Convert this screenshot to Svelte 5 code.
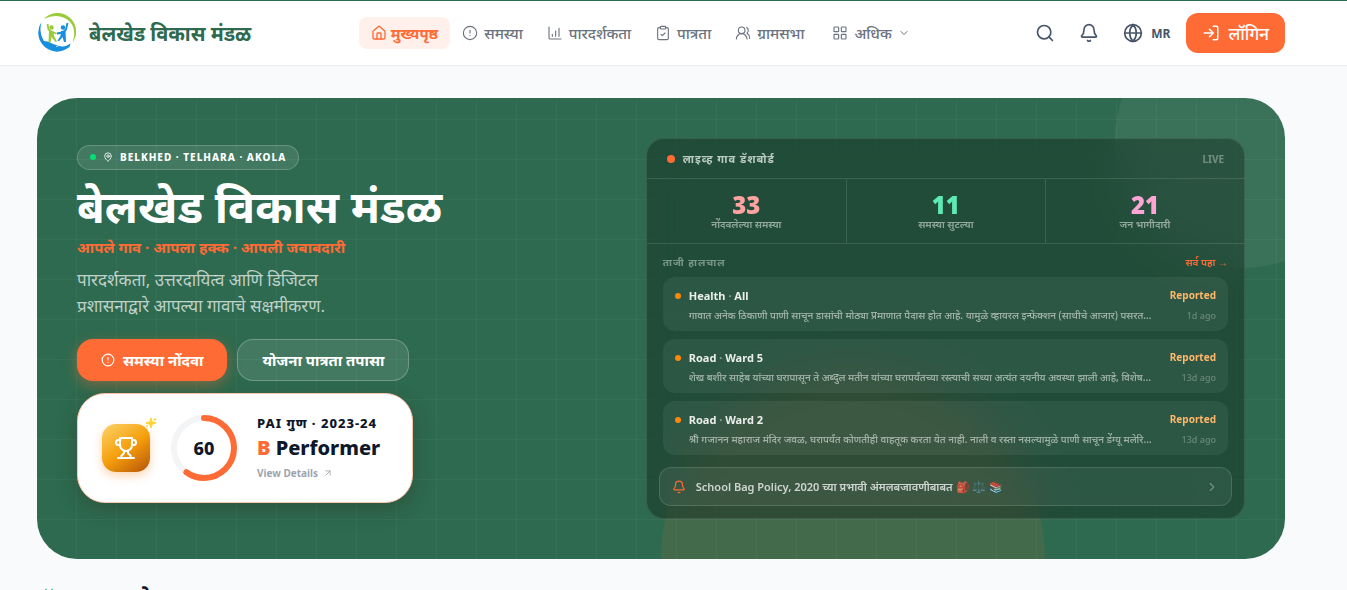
<script>
  const nav = [
    { label: 'मुख्यपृष्ठ', icon: 'home', active: true },
    { label: 'समस्या', icon: 'alert' },
    { label: 'पारदर्शकता', icon: 'chart' },
    { label: 'पात्रता', icon: 'clipboard' },
    { label: 'ग्रामसभा', icon: 'users' },
    { label: 'अधिक', icon: 'grid', more: true }
  ];
  const stats = [
    { value: 33, label: 'नोंदवलेल्या समस्या', tone: 'rose' },
    { value: 11, label: 'समस्या सुटल्या', tone: 'mint' },
    { value: 21, label: 'जन भागीदारी', tone: 'pink' }
  ];
  const feed = [
    { kind: 'Health', area: 'All', age: '1d ago', text: 'गावात अनेक ठिकाणी पाणी साचून डासांची मोठ्या प्रमाणात पैदास होत आहे. यामुळे व्हायरल इन्फेक्शन (साथीचे आजार) पसरत...' },
    { kind: 'Road', area: 'Ward 5', age: '13d ago', text: 'शेख बशीर साहेब यांच्या घरापासून ते अब्दुल मतीन यांच्या घरापर्यंतच्या रस्त्याची सध्या अत्यंत दयनीय अवस्था झाली आहे, विशेष...' },
    { kind: 'Road', area: 'Ward 2', age: '13d ago', text: 'श्री गजानन महाराज मंदिर जवळ, घरापर्यंत कोणतीही वाहतूक करता येत नाही. नाली व रस्ता नसल्यामुळे पाणी साचून डेंग्यू मलेरि...' }
  ];
</script>

{#snippet icon(name, size = 16, width = 2)}
  <svg class="icon" width={size} height={size} viewBox="0 0 24 24" stroke-width={width} aria-hidden="true">
    {#if name === 'home'}
      <path d="M15 21v-8a1 1 0 0 0-1-1h-4a1 1 0 0 0-1 1v8" />
      <path d="M3 10a2 2 0 0 1 .7-1.5l7-6a2 2 0 0 1 2.6 0l7 6A2 2 0 0 1 21 10v9a2 2 0 0 1-2 2H5a2 2 0 0 1-2-2z" />
    {:else if name === 'alert'}
      <circle cx="12" cy="12" r="10" /><path d="M12 8v4M12 16h.01" />
    {:else if name === 'chart'}
      <path d="M3 3v16a2 2 0 0 0 2 2h16M8 17v-3M13 17V9M18 17V5" />
    {:else if name === 'clipboard'}
      <rect x="8" y="2" width="8" height="4" rx="1" />
      <path d="M16 4h2a2 2 0 0 1 2 2v14a2 2 0 0 1-2 2H6a2 2 0 0 1-2-2V6a2 2 0 0 1 2-2h2M9 14l2 2 4-4" />
    {:else if name === 'users'}
      <circle cx="10" cy="8" r="5" /><path d="M18 21a8 8 0 0 0-16 0M22 20c0-3.4-2-6.5-4-8a5 5 0 0 0-.5-8.3" />
    {:else if name === 'grid'}
      <rect x="3" y="3" width="7" height="7" rx="1" /><rect x="14" y="3" width="7" height="7" rx="1" />
      <rect x="14" y="14" width="7" height="7" rx="1" /><rect x="3" y="14" width="7" height="7" rx="1" />
    {:else if name === 'down'}
      <path d="m6 9 6 6 6-6" />
    {:else if name === 'right'}
      <path d="m9 18 6-6-6-6" />
    {:else if name === 'search'}
      <circle cx="11" cy="11" r="8" /><path d="m21 21-4.3-4.3" />
    {:else if name === 'bell'}
      <path d="M10.3 21a2 2 0 0 0 3.4 0" />
      <path d="M3.3 15.3A1 1 0 0 0 4 17h16a1 1 0 0 0 .7-1.7C19.4 14 18 12.5 18 8A6 6 0 0 0 6 8c0 4.500-1.400 6-2.700 7.300" />
    {:else if name === 'globe'}
      <circle cx="12" cy="12" r="10" /><path d="M12 2a14.500 14.500 0 0 0 0 20 14.500 14.500 0 0 0 0-20M2 12h20" />
    {:else if name === 'login'}
      <path d="M15 3h4a2 2 0 0 1 2 2v14a2 2 0 0 1-2 2h-4M10 17l5-5-5-5M15 12H3" />
    {:else if name === 'pin'}
      <path d="M20 10c0 5-5.500 10.200-7.400 11.800a1 1 0 0 1-1.200 0C9.500 20.200 4 15 4 10a8 8 0 0 1 16 0" /><circle cx="12" cy="10" r="3" />
    {:else if name === 'trophy'}
      <path d="M6 9H4.500a2.500 2.500 0 0 1 0-5H6M18 9h1.500a2.500 2.500 0 0 0 0-5H18M4 22h16M10 14.700V17c0 .5-.5 1-1 1.200C7.900 18.800 7 20.200 7 22M14 14.700V17c0 .5.5 1 1 1.200 1.100.6 2 2 2 3.800M18 2H6v7a6 6 0 0 0 12 0V2Z" />
    {:else if name === 'sparkles'}
      <path fill="currentColor" d="M9.900 15.500A2 2 0 0 0 8.500 14.100l-6.100-1.600a.5.5 0 0 1 0-1L8.500 9.900A2 2 0 0 0 9.900 8.500l1.600-6.100a.5.5 0 0 1 1 0l1.600 6.100a2 2 0 0 0 1.400 1.400l6.100 1.600a.5.5 0 0 1 0 1l-6.100 1.600a2 2 0 0 0-1.400 1.400l-1.600 6.100a.5.5 0 0 1-1 0z" />
      <path d="M20 3v4M22 5h-4M4 17v2M5 18H3" />
    {:else if name === 'out'}
      <path d="M7 7h10v10M7 17 17 7" />
    {:else if name === 'calendar'}
      <path d="M8 2v4M16 2v4M3 10h18" /><rect x="3" y="4" width="18" height="18" rx="2" />
    {/if}
  </svg>
{/snippet}

<div class="page">
  <header>
    <div class="container bar">
      <a class="brand" href="#home">
        <svg width="40" height="40" viewBox="0 0 40 40" aria-hidden="true">
          <path d="M7 6A18.500 18.500 0 0 1 35.500 29.500Q40.500 15 31 7Q20-.5 7 6Z" fill="#9acb3b" />
          <path d="M4.500 9A19 19 0 0 0 8.500 34.500Q20 43 32.500 34L33.500 30.500Q28 34.500 23 33L16 31Q12 28 7 28Q1.500 19 4.500 9Z" fill="#168fdc" />
          <path d="m19 33.500 3-1 4 .3 5-2.500" fill="none" stroke="#fff" stroke-width=".8" />
          <circle cx="14.500" cy="14.500" r="2.200" fill="#9acb3b" />
          <path d="m10.500 11 1 5.500 3 2.500 5 1.500" fill="none" stroke="#9acb3b" stroke-width="1.800" stroke-linejoin="round" />
          <path d="m12 17.500 4.500.5.500 5 3 5.500-1.500.5-4-5-1 5.500h-2z" fill="#9acb3b" />
          <circle cx="26" cy="14.500" r="2.200" fill="#168fdc" />
          <path d="m30.500 10-1.500 6.500-3 3-6 1" fill="none" stroke="#168fdc" stroke-width="1.800" stroke-linejoin="round" />
          <path d="m28.500 17.500-4.500.5-.5 5-3 4.500 1.500.8 3.500-4.300 1.500 5h2z" fill="#168fdc" />
        </svg>
        <span>बेलखेड विकास मंडळ</span>
      </a>
      <nav>
        {#each nav as item}
          <a href="#{item.icon}" class:active={item.active} class:more={item.more}>
            {@render icon(item.icon, 16, item.active ? 2 : 1.7)}<span>{item.label}</span>
            {#if item.more}{@render icon('down', 12)}{/if}
          </a>
        {/each}
      </nav>
      <div class="actions">
        <button class="round" aria-label="Search">{@render icon('search', 20)}</button>
        <button class="round" aria-label="Notifications">{@render icon('bell', 20)}</button>
        <button class="lang">{@render icon('globe', 20)}<span>MR</span></button>
        <button class="login">{@render icon('login', 18)}<span>लॉगिन</span></button>
      </div>
    </div>
  </header>

  <main>
    <section class="hero">
      <div class="disc top"></div>
      <div class="disc bottom"></div>
      <div class="grid-lines"></div>
      <div class="intro">
        <div class="badge"><i></i>{@render icon('pin', 10)}<span>BELKHED · TELHARA · AKOLA</span></div>
        <h1>बेलखेड विकास मंडळ</h1>
        <p class="tagline">आपले गाव · आपला हक्क · आपली जबाबदारी</p>
        <p class="lead">पारदर्शकता, उत्तरदायित्व आणि डिजिटल प्रशासनाद्वारे आपल्या गावाचे सक्षमीकरण.</p>
        <div class="cta">
          <button class="primary">{@render icon('alert', 14)}<span>समस्या नोंदवा</span></button>
          <button class="ghost">योजना पात्रता तपासा</button>
        </div>
        <a class="score" href="#pai">
          <div class="trophy">{@render icon('trophy', 24)}<div class="spark">{@render icon('sparkles', 12)}</div></div>
          <div class="ring">
            <svg width="66" height="66" viewBox="0 0 66 66" aria-hidden="true">
              <circle cx="33" cy="33" r="30" fill="none" stroke="#f3f4f6" stroke-width="6" />
              <circle cx="33" cy="33" r="30" fill="none" stroke="#ff6b35" stroke-width="6" stroke-linecap="round" pathLength="100" stroke-dasharray="60 100" transform="rotate(-90 33 33)" />
            </svg>
            <strong>60</strong>
          </div>
          <div class="grade">
            <span class="year">PAI गुण · 2023-24</span>
            <span class="level"><b>B</b> Performer</span>
            <span class="details">View Details {@render icon('out', 10)}</span>
          </div>
        </a>
      </div>

      <div class="panel">
        <div class="panel-head"><h2><i></i>लाइव्ह गाव डॅशबोर्ड</h2><span>LIVE</span></div>
        <div class="stats">
          {#each stats as s}
            <div><strong class={s.tone}>{s.value}</strong><span>{s.label}</span></div>
          {/each}
        </div>
        <div class="recent">
          <div class="recent-head"><h3>ताजी हालचाल</h3><a href="#all">सर्व पहा →</a></div>
          <ul>
            {#each feed as f}
              <li>
                <i></i>
                <div class="row"><strong>{f.kind} <em>·</em> {f.area}</strong><b>Reported</b></div>
                <div class="row sub"><p>{f.text}</p><time>{f.age}</time></div>
              </li>
            {/each}
          </ul>
        </div>
        <a class="notice" href="#notice">
          {@render icon('bell', 14)}<span>School Bag Policy, 2020 च्या प्रभावी अंमलबजावणीबाबत <small>🎒 ⚖️ 📚</small></span>{@render icon('right', 14)}
        </a>
      </div>
    </section>
    <h2 class="next">{@render icon('calendar', 18)}<span>गावामधले कामकाज</span></h2>
  </main>
</div>

<style>
  :global(body) { background: #f8fafc; }
  .page, .page * { box-sizing: border-box; }
  .page { font-family: "Noto Sans", sans-serif; color: #111827; height: 100vh; overflow: hidden; padding-right: 25px; }
  h1, h2, h3, p, ul { margin: 0; padding: 0; }
  a { color: inherit; text-decoration: none; }
  button { font: inherit; border: 0; background: none; padding: 0; cursor: pointer; }
  .icon { fill: none; stroke: currentColor; stroke-linecap: round; stroke-linejoin: round; flex: none; }
  header { background: #fff; border-top: 1px solid #2d6a4f; border-bottom: 1px solid #e9edf2; margin-right: -25px; padding-right: 25px; }
  .container, main { max-width: 1280px; margin: 0 auto; padding: 0 16px; }
  main { padding-top: 32px; }
  .bar { display: flex; align-items: center; justify-content: space-between; height: 64px; }
  .brand { display: flex; align-items: center; gap: 12px; color: #2d6a4f; font-size: 20px; font-weight: 700; }
  nav { display: flex; align-items: center; margin-left: 6px; }
  nav a { display: flex; align-items: center; gap: 6px; height: 32px; padding: 0 12px; border-radius: 8px; color: #6b7280; font-size: 15px; font-weight: 500; }
  nav .active { gap: 4px; color: #ff6b35; background: #fff0eb; font-weight: 700; }
  nav .more { margin-left: 4px; }
  .actions { display: flex; align-items: center; color: #475569; }
  .round { display: flex; padding: 12px; color: inherit; }
  .lang { display: flex; align-items: center; gap: 8px; padding: 0 16px 0 12px; color: inherit; font-size: 12px; font-weight: 700; }
  .login { display: flex; align-items: center; gap: 8px; height: 40px; padding: 0 16px; border-radius: 12px; color: #fff; background: #ff6b35; font-size: 17px; font-weight: 500; }

  .hero { position: relative; display: grid; grid-template-columns: 1fr 1.1fr; gap: 24px; align-items: center; padding: 40px; border-radius: 40px; overflow: hidden; background: #2d6a4f; color: #fff; }
  .disc { position: absolute; border-radius: 50%; }
  .disc.top { width: 256px; height: 256px; top: -86px; right: -86px; background: rgba(255, 255, 255, .06); }
  .disc.bottom { width: 384px; height: 384px; left: 50%; bottom: -192px; background: rgba(255, 107, 53, .1); }
  .grid-lines { position: absolute; inset: 0; background: repeating-linear-gradient(0deg, transparent 0 39px, rgba(255, 255, 255, .04) 39px 40px), repeating-linear-gradient(90deg, transparent 0 39px, rgba(255, 255, 255, .04) 39px 40px); }
  .intro, .panel { position: relative; min-width: 0; }
  .intro { padding-bottom: 10px; }
  .badge { display: flex; align-items: center; width: fit-content; height: 25px; padding: 0 12px; gap: 7px; border: 1px solid rgba(255, 255, 255, .2); border-radius: 16px; background: rgba(255, 255, 255, .1); font-size: 10px; font-weight: 800; letter-spacing: 1px; }
  .badge i { width: 6px; height: 6px; border-radius: 50%; background: #05df72; }
  h1 { margin-top: 8px; font-size: 45px; line-height: 56px; font-weight: 700; white-space: nowrap; }
  .tagline { margin-top: 1px; color: #ff6b35; font-size: 15px; line-height: 24px; font-weight: 700; }
  .lead { max-width: 290px; margin-top: 8px; color: rgba(255, 255, 255, .7); font-size: 17px; line-height: 26px; }
  .cta { display: flex; gap: 10px; margin-top: 20px; }
  .cta button { display: flex; align-items: center; gap: 8px; height: 42px; padding: 0 24px; border-radius: 16px; color: #fff; font-size: 15px; font-weight: 700; }
  .primary { background: #ff6b35; box-shadow: 0 4px 14px rgba(255, 107, 53, .4); }
  .cta .ghost { border: 1px solid rgba(255, 255, 255, .25); background: rgba(255, 255, 255, .1); }
  .score { display: flex; align-items: center; width: fit-content; height: 110px; margin-top: 12px; padding: 0 32px 0 24px; border: 1px solid #ffc4ae; border-radius: 28px; background: #fff; color: #0f172a; box-shadow: 0 6px 20px rgba(50, 40, 20, .3); }
  .trophy { position: relative; display: grid; place-items: center; width: 48px; height: 48px; border-radius: 14px; color: #fff; background: linear-gradient(145deg, #fcd469, #f59e0b 52%, #b45309); box-shadow: 0 4px 10px rgba(245, 120, 11, .3); }
  .spark { position: absolute; top: -7px; right: -7px; display: flex; color: #fcd535; }
  .ring { display: grid; place-items: center; margin-left: 21px; }
  .ring > * { grid-area: 1 / 1; }
  .ring strong { font-size: 18px; font-weight: 800; }
  .grade { display: flex; flex-direction: column; margin-left: 20px; }
  .year { font-size: 13px; line-height: 20px; font-weight: 800; letter-spacing: 1px; }
  .level { font-size: 20px; line-height: 30px; font-weight: 800; }
  .level b { color: #ff6b35; font-weight: 900; }
  .details { display: flex; align-items: center; gap: 5px; color: #9ca3af; font-size: 10px; line-height: 20px; font-weight: 700; }

  .panel { border: 1px solid rgba(255, 255, 255, .1); border-radius: 18px; background: rgba(0, 0, 0, .28); backdrop-filter: blur(20px); overflow: hidden; }
  .panel-head { display: flex; align-items: center; justify-content: space-between; height: 40px; padding: 0 20px; border-bottom: 1px solid rgba(255, 255, 255, .12); }
  .panel-head h2 { display: flex; align-items: center; gap: 8px; color: rgba(255, 255, 255, .7); font-size: 11px; font-weight: 700; letter-spacing: 1px; }
  .panel-head i { width: 8px; height: 8px; border-radius: 50%; background: #ff6b35; }
  .panel-head span { color: rgba(255, 255, 255, .35); font-size: 10px; font-weight: 700; }
  .stats { display: grid; grid-template-columns: repeat(3, 1fr); border-bottom: 1px solid rgba(255, 255, 255, .12); }
  .stats div { display: flex; flex-direction: column; align-items: center; height: 64px; padding-top: 14px; border-left: 1px solid rgba(255, 255, 255, .12); }
  .stats div:first-child { border-left: 0; }
  .stats strong { font-size: 24px; line-height: 24px; font-weight: 900; }
  .stats span { color: rgba(255, 255, 255, .5); font-size: 10px; line-height: 14px; font-weight: 600; }
  .rose { color: #ffa2a2; }
  .mint { color: #5ee9b5; }
  .pink { color: #fda5d5; }
  .recent { padding: 8px 16px 12px; }
  .recent-head { display: flex; align-items: center; justify-content: space-between; height: 20px; margin-bottom: 5px; }
  h3 { color: rgba(255, 255, 255, .4); font-size: 10px; font-weight: 700; letter-spacing: 1px; }
  .recent-head a { color: #ff6b35; font-size: 10px; font-weight: 600; }
  ul { display: grid; grid-template-columns: minmax(0, 1fr); gap: 8px; list-style: none; }
  li { position: relative; height: 54px; padding: 8px 12px 8px 26px; border-radius: 12px; background: rgba(255, 255, 255, .06); }
  li i { position: absolute; left: 12px; top: 16px; width: 6px; height: 6px; border-radius: 50%; background: #ff8904; }
  .row { display: flex; align-items: center; justify-content: space-between; gap: 10px; height: 20px; font-size: 11px; }
  .row strong { color: rgba(255, 255, 255, .9); font-weight: 700; }
  .row em { color: rgba(255, 255, 255, .5); font-style: normal; }
  .row b { color: #ffb86a; font-size: 10px; font-weight: 700; }
  .sub p { flex: 1; min-width: 0; overflow: hidden; white-space: nowrap; text-overflow: ellipsis; color: rgba(255, 255, 255, .55); font-size: 10px; font-weight: 500; }
  .sub time { color: rgba(255, 255, 255, .28); font-size: 9px; font-weight: 500; }
  .notice { display: flex; align-items: center; gap: 10px; height: 39px; margin: 0 12px 12px; padding: 0 12px; border: 1px solid rgba(255, 255, 255, .14); border-radius: 12px; background: rgba(255, 255, 255, .06); color: #ff6b35; font-size: 11px; font-weight: 600; }
  .notice span { flex: 1; color: rgba(255, 255, 255, .75); }
  .notice small { font-size: 11px; }
  .notice > :last-child { color: rgba(255, 255, 255, .35); }
  .next { display: flex; align-items: center; gap: 8px; margin: 20px 3px 0; font-size: 22px; line-height: 36px; }
  .next .icon { color: #10b981; }
</style>
